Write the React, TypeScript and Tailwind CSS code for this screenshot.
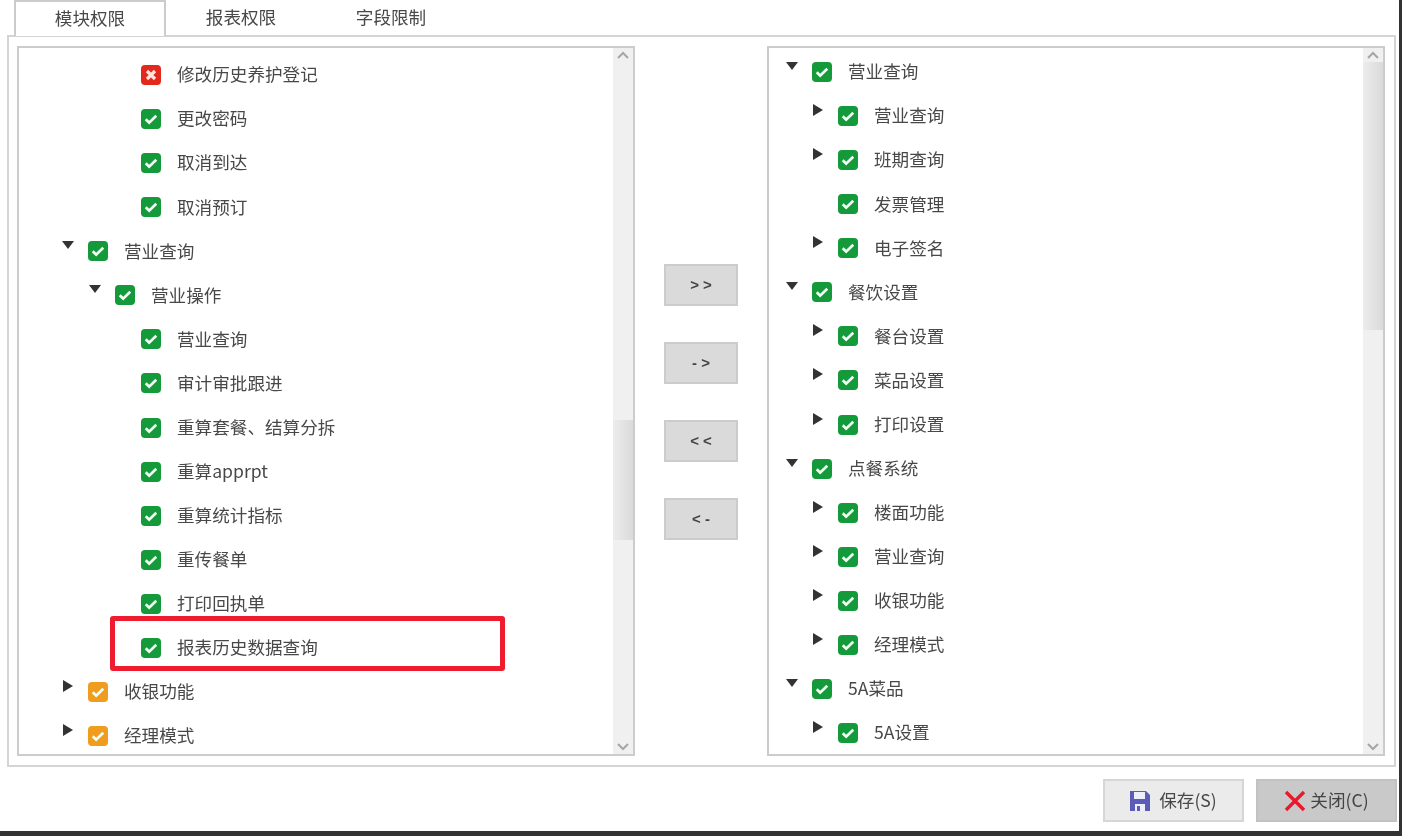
import React from "react";

type Node = { label: string; level: number; arrow?: "down" | "right"; state?: "ok" | "no" | "part" };

const leftRows: Node[] = [
    { label: "修改历史养护登记", level: 3, state: "no" },
    { label: "更改密码", level: 3 },
    { label: "取消到达", level: 3 },
    { label: "取消预订", level: 3 },
    { label: "营业查询", level: 1, arrow: "down" },
    { label: "营业操作", level: 2, arrow: "down" },
    { label: "营业查询", level: 3 },
    { label: "审计审批跟进", level: 3 },
    { label: "重算套餐、结算分拆", level: 3 },
    { label: "重算apprpt", level: 3 },
    { label: "重算统计指标", level: 3 },
    { label: "重传餐单", level: 3 },
    { label: "打印回执单", level: 3 },
    { label: "报表历史数据查询", level: 3 },
    { label: "收银功能", level: 1, arrow: "right", state: "part" },
    { label: "经理模式", level: 1, arrow: "right", state: "part" },
];

const rightRows: Node[] = [
    { label: "营业查询", level: 0, arrow: "down" },
    { label: "营业查询", level: 1, arrow: "right" },
    { label: "班期查询", level: 1, arrow: "right" },
    { label: "发票管理", level: 1 },
    { label: "电子签名", level: 1, arrow: "right" },
    { label: "餐饮设置", level: 0, arrow: "down" },
    { label: "餐台设置", level: 1, arrow: "right" },
    { label: "菜品设置", level: 1, arrow: "right" },
    { label: "打印设置", level: 1, arrow: "right" },
    { label: "点餐系统", level: 0, arrow: "down" },
    { label: "楼面功能", level: 1, arrow: "right" },
    { label: "营业查询", level: 1, arrow: "right" },
    { label: "收银功能", level: 1, arrow: "right" },
    { label: "经理模式", level: 1, arrow: "right" },
    { label: "5A菜品", level: 0, arrow: "down" },
    { label: "5A设置", level: 1, arrow: "right" },
];

const indent = ["pl-[17px]", "pl-[43px]", "pl-[70px]", "pl-[96px]"];

const Check = ({ state = "ok" }: { state?: Node["state"] }) => {
    const bg = state === "no" ? "bg-[#e2291b]" : state === "part" ? "bg-[#ef9c1f]" : "bg-[#149a3a]";
    return (
        <span className={`flex h-[20px] w-[20px] shrink-0 items-center justify-center rounded-[4px] ${bg}`}>
            <svg width="16" height="16" viewBox="0 0 14 14" fill="none" stroke="white" strokeWidth="2.4">
                {state === "no" ? (
                    <path d="M3.5 3.5l7 7M10.5 3.5l-7 7" stroke="#ffe4e0" strokeWidth="2.8" />
                ) : (
                    <path d="M2.4 7.2l3 3 6.2-6" stroke="#f2fff4" />
                )}
            </svg>
        </span>
    );
};

const Arrow = ({ dir }: { dir?: Node["arrow"] }) => (
    <span className="flex h-[32px] w-[26px] shrink-0 items-start pt-[2px]">
        {dir === "down" && (
            <svg width="12" height="8" viewBox="0 0 12 8" className="mt-[4px]">
                <path d="M0 0h12L6 8z" fill="#333" />
            </svg>
        )}
        {dir === "right" && (
            <svg width="10" height="12" viewBox="0 0 10 12" className="mt-[2px] ml-[1px]">
                <path d="M0 0l10 6-10 6z" fill="#333" />
            </svg>
        )}
    </span>
);

const Tree = ({ rows, className }: { rows: Node[]; className: string }) => (
    <div className={`min-w-0 flex-1 overflow-hidden ${className}`}>
        {rows.map((r, i) => (
            <div key={i} className={`flex h-[44.07px] items-center ${indent[r.level]}`}>
                <Arrow dir={r.arrow} />
                <Check state={r.state} />
                <span className="ml-[16px] pb-[1px] text-[17.6px] whitespace-nowrap text-[#484848]">{r.label}</span>
            </div>
        ))}
    </div>
);

const Scrollbar = ({ spacer, thumb }: { spacer: string; thumb: string }) => (
    <div className="flex w-[20px] shrink-0 flex-col bg-[#f0f0f0]">
        <div className="flex h-[14px] shrink-0 items-center justify-center">
            <svg width="14" height="8" viewBox="0 0 14 8" fill="none" stroke="#a6a6a6" strokeWidth="2">
                <path d="M2 7l5-5 5 5" />
            </svg>
        </div>
        <div className={`shrink-0 ${spacer}`} />
        <div className={`shrink-0 bg-gradient-to-r from-[#ececec] to-[#dadada] ${thumb}`} />
        <div className="flex-1" />
        <div className="flex h-[14px] shrink-0 items-center justify-center">
            <svg width="14" height="8" viewBox="0 0 14 8" fill="none" stroke="#a6a6a6" strokeWidth="2">
                <path d="M2 1l5 5 5-5" />
            </svg>
        </div>
    </div>
);

const MoveButton = ({ text }: { text: string }) => (
    <button className="h-[42px] w-[74px] border-2 border-[#cccccc] bg-[#dadada] text-[15px] font-bold text-[#444] [font-family:'Liberation_Sans',sans-serif]">
        {text}
    </button>
);

export default function App() {
    return (
        <div className="relative h-[836px] w-[1402px] overflow-hidden bg-[#333333] [font-family:'Noto_Sans_CJK_SC','Noto_Sans',sans-serif]">
            <div className="flex h-[831px] w-[1399px] flex-col bg-white blur-[0.5px]">
                {/* 标签页 */}
                <div className="relative z-10 -mb-[1px] flex h-[36px] shrink-0 pl-[14px]">
                    <div className="flex w-[152px] items-center justify-center border-2 border-b-0 border-[#cccccc] bg-white pb-[2px] text-[17.6px] text-[#484848]">
                        模块权限
                    </div>
                    <div className="flex w-[150px] items-center justify-center pb-[2px] text-[17.6px] text-[#484848]">
                        报表权限
                    </div>
                    <div className="flex w-[150px] items-center justify-center pb-[2px] text-[17.6px] text-[#484848]">
                        字段限制
                    </div>
                </div>

                <div className="ml-[7px] flex h-[732px] w-[1389px] shrink-0 border-2 border-[#d4d4d4] py-[9px] pr-[9px] pl-[8px]">
                    <div className="flex h-[710px] w-[618px] shrink-0 border-2 border-[#cccccc]">
                        <Tree rows={leftRows} className="pt-[5px]" />
                        <Scrollbar spacer="h-[358px]" thumb="h-[120px]" />
                    </div>
                    <div className="flex flex-1 flex-col items-center gap-[36px] pt-[218px]">
                        <MoveButton text="> >" />
                        <MoveButton text="- >" />
                        <MoveButton text="< <" />
                        <MoveButton text="< -" />
                    </div>
                    <div className="flex h-[710px] w-[618px] shrink-0 border-2 border-[#cccccc]">
                        <Tree rows={rightRows} className="pt-[2px]" />
                        <Scrollbar spacer="h-[0px]" thumb="h-[268px]" />
                    </div>
                </div>

                <div className="flex flex-1 items-start justify-end gap-[12px] pt-[12px] pr-[2px]">
                    <button className="flex h-[43px] w-[141px] items-center justify-center gap-[9px] border-2 border-[#d6d6d6] bg-[#ebebeb] text-[17.6px] text-[#484848]">
                        <svg width="20" height="22" viewBox="0 0 20 22">
                            <path d="M0 1h16l4 4v16H0z" fill="#5a5cb8" />
                            <path d="M4 2h11v7H4z" fill="#eeeef8" />
                            <path d="M5 14h10v7H5z" fill="#eeeef8" />
                            <path d="M7 16h3v5H7z" fill="#5a5cb8" />
                        </svg>
                        保存(S)
                    </button>
                    <button className="flex h-[43px] w-[141px] items-center justify-center gap-[4px] border-2 border-[#c2c2c2] bg-[#c9c9c9] text-[17.6px] text-[#444]">
                        <svg width="22" height="22" viewBox="0 0 22 22" fill="none" stroke="#e8192c" strokeWidth="3.4">
                            <path d="M2 2l18 18M20 2L2 20" />
                        </svg>
                        关闭(C)
                    </button>
                </div>
            </div>
            {/* 截图上的红框标注 */}
            <div className="absolute top-[616px] left-[110px] h-[55px] w-[395px] rounded-[3px] border-[5px] border-[#ee1c2e]" />
        </div>
    );
}
